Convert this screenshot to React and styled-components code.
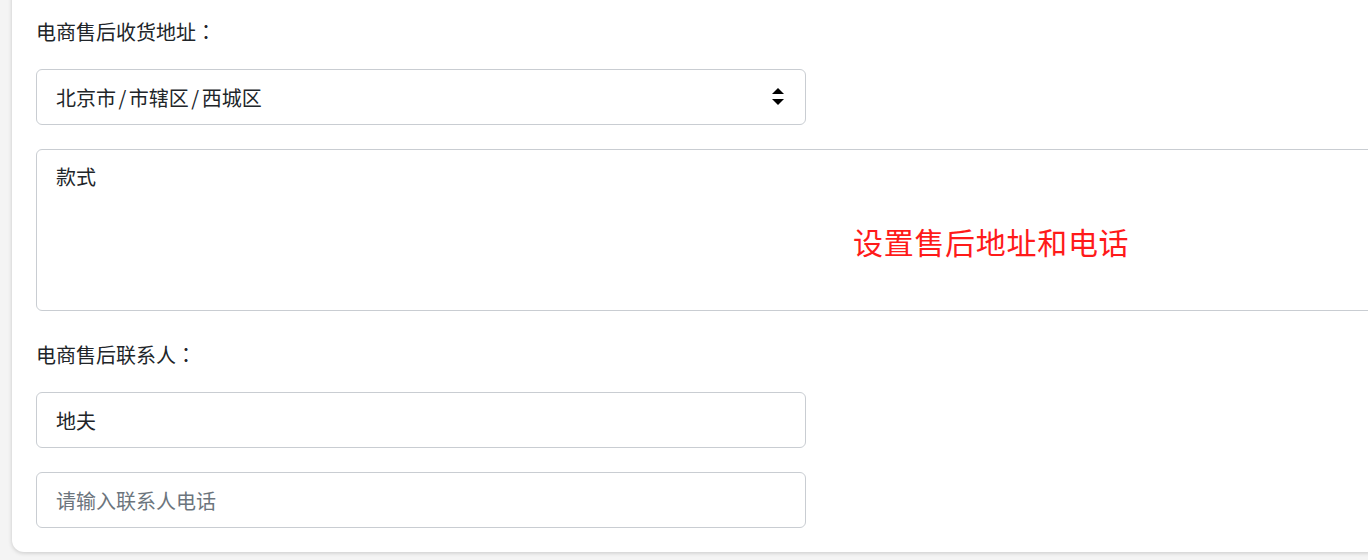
import React from "react";
import styled, { createGlobalStyle } from "styled-components";

const GlobalStyle = createGlobalStyle`
  html {
    overflow: hidden;
  }
  body {
    margin: 0;
    padding: 0;
    background: #f4f4f4;
    font-family: "Noto Sans CJK SC", "Noto Sans", sans-serif;
    color: #212529;
  }
`;

const Page = styled.div`
  height: 560px;
  overflow: hidden;
  padding-left: 12px;
  box-sizing: border-box;
`;

const Card = styled.div`
  width: 1440px;
  margin-top: -24px;
  padding: 41px 24px 24px 24px;
  background: #ffffff;
  border-radius: 12px;
  box-shadow: 0 1px 4px rgba(0, 0, 0, 0.18);
  box-sizing: border-box;
  display: flex;
  flex-direction: column;
`;

const Label = styled.div`
  font-size: 20px;
  line-height: 30px;
  height: 30px;
  color: #212529;
  margin-top: ${(p) => (p.$spaced ? "29px" : "0")};
  margin-bottom: 22px;
`;

const Colon = styled.span`
  font-family: "Noto Sans CJK TC", "Noto Sans CJK SC", sans-serif;
`;

const SelectBox = styled.div`
  box-sizing: border-box;
  width: 770px;
  height: 56px;
  border: 1px solid #c9cdd2;
  border-radius: 6px;
  background: #fff;
  font-size: 20px;
  color: #212529;
  padding: 0 21px 0 19px;
  display: flex;
  align-items: center;
  justify-content: space-between;
  cursor: pointer;
`;

const Slash = styled.span`
  margin: 0 2.5px;
`;

const Arrows = styled.svg`
  width: 12px;
  height: 18px;
  flex: none;
`;

const AreaWrap = styled.div`
  position: relative;
  margin-top: 24px;
`;

const TextArea = styled.textarea`
  box-sizing: border-box;
  display: block;
  width: 1400px;
  height: 162px;
  border: 1px solid #c9cdd2;
  border-radius: 6px;
  padding: 12px 19px;
  font-family: "Noto Sans CJK SC", "Noto Sans", sans-serif;
  font-size: 20px;
  line-height: 30px;
  color: #212529;
  resize: none;
  outline: none;
`;

const Note = styled.div`
  position: absolute;
  left: 817px;
  top: 77px;
  font-size: 30px;
  line-height: 30px;
  letter-spacing: 0.7px;
  color: #ff1a1a;
  white-space: nowrap;
  pointer-events: none;
`;

const Input = styled.input`
  box-sizing: border-box;
  display: block;
  width: 770px;
  height: 56px;
  border: 1px solid #c9cdd2;
  border-radius: 6px;
  background: #fff;
  font-family: "Noto Sans CJK SC", "Noto Sans", sans-serif;
  font-size: 20px;
  color: #212529;
  padding: 0 19px;
  outline: none;
  margin-top: ${(p) => (p.$spaced ? "24px" : "0")};
  &::placeholder {
    color: #6c757d;
  }
`;

export default function App() {
  return (
    <>
      <GlobalStyle />
      <Page>
        <Card>
          <Label>
            电商售后收货地址<Colon>：</Colon>
          </Label>
          <SelectBox role="combobox" aria-expanded="false">
            <span>
              北京市<Slash>/</Slash>市辖区<Slash>/</Slash>西城区
            </span>
            <Arrows viewBox="0 0 12 18" aria-hidden="true">
              <path d="M6 0 L12 6 L0 6 Z" fill="#000" />
              <path d="M0 11 L12 11 L6 17 Z" fill="#000" />
            </Arrows>
          </SelectBox>
          <AreaWrap>
            <TextArea defaultValue="款式" />
            <Note>设置售后地址和电话</Note>
          </AreaWrap>
          <Label $spaced>
            电商售后联系人<Colon>：</Colon>
          </Label>
          <Input defaultValue="地夫" />
          <Input $spaced placeholder="请输入联系人电话" />
        </Card>
      </Page>
    </>
  );
}
